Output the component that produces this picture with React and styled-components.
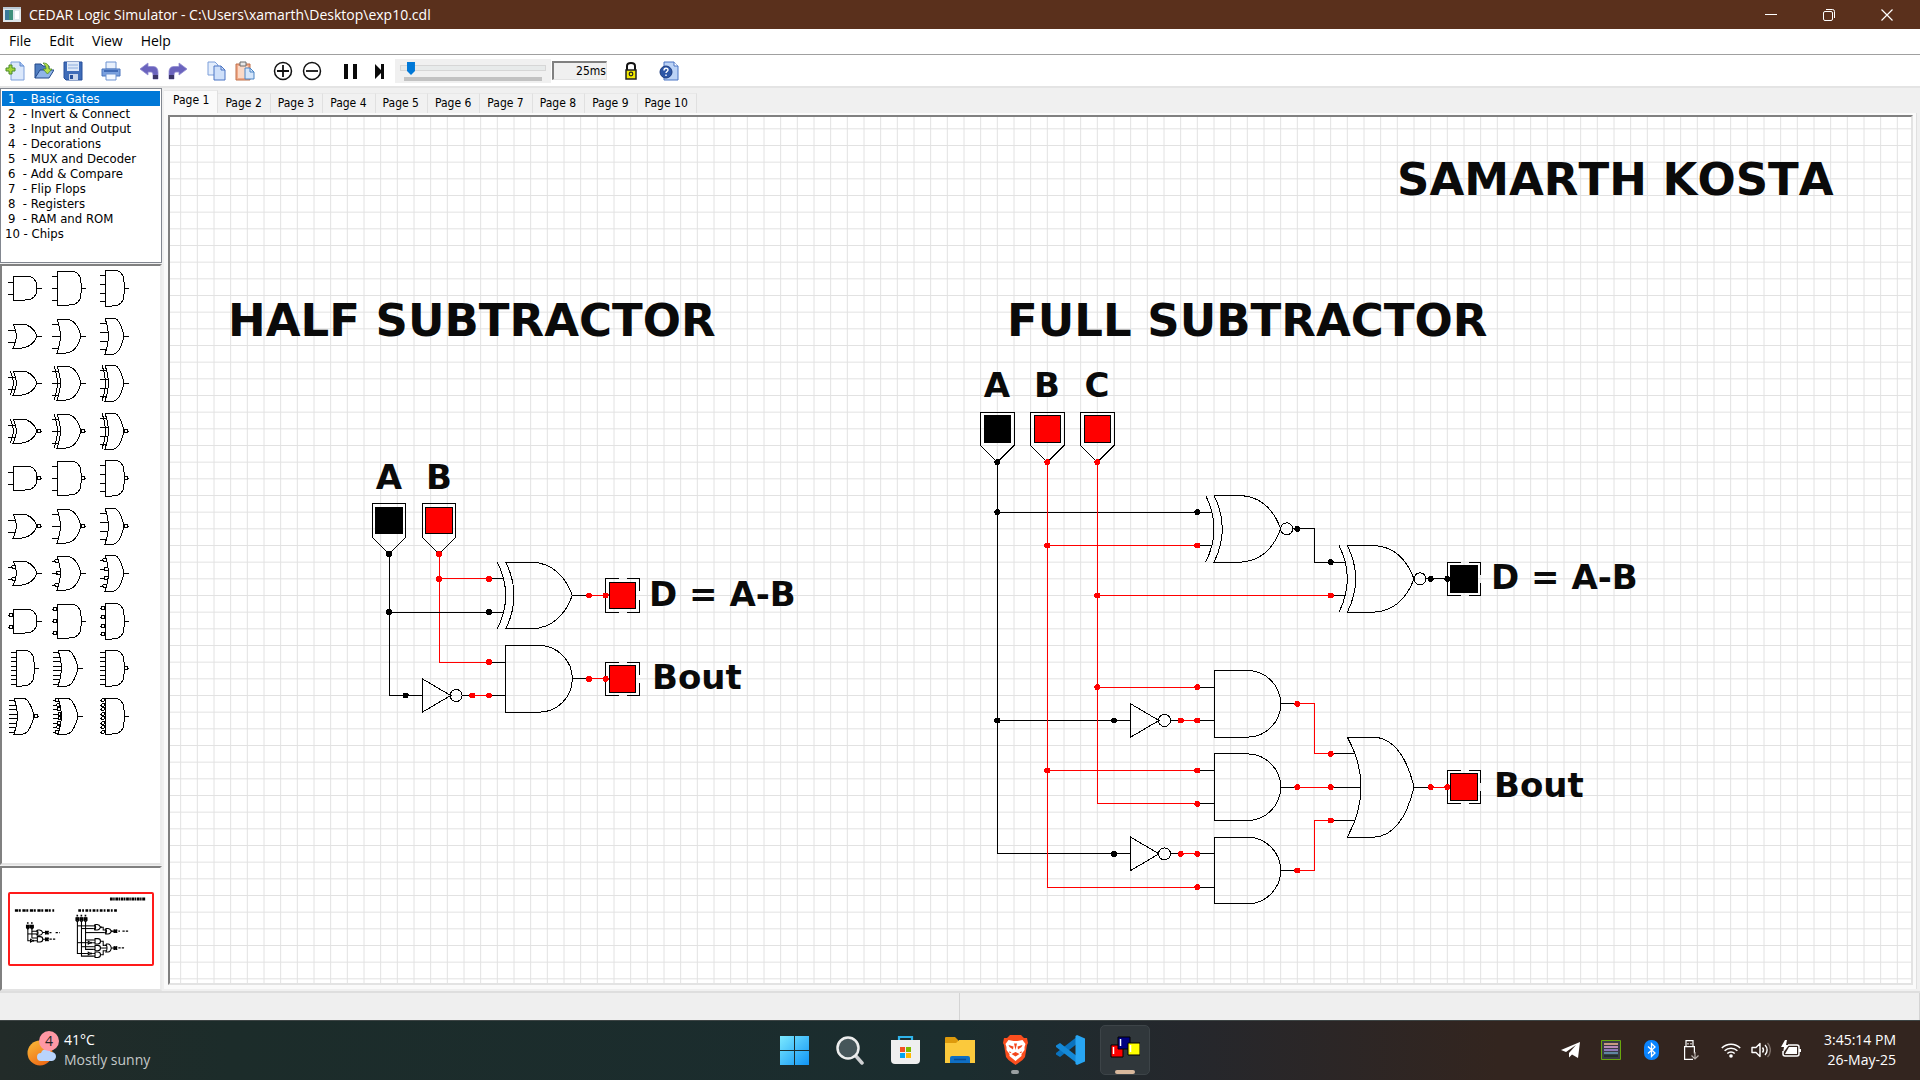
import React from "react";
import styled, { createGlobalStyle, css } from "styled-components";

const UI = `"Open Sans", "Noto Sans", sans-serif`;
const SMALL = `"DejaVu Sans Condensed", "DejaVu Sans", sans-serif`;

const GlobalStyle = createGlobalStyle`
  * { box-sizing: border-box; }
  html, body, #root { height: 100%; }
  body { margin: 0; background: #f0f0f0; font-family: ${UI}; color: #000; overflow: hidden; }
  button { font: inherit; color: inherit; background: none; border: 0; padding: 0; margin: 0; }
  ul { list-style: none; margin: 0; padding: 0; }
  svg { display: block; }
`;

const Window = styled.div`
  display: flex;
  flex-direction: column;
  height: 100vh;
`;

/* ---------- title bar, menu ---------- */

const TitleBar = styled.header`
  display: flex;
  align-items: center;
  height: 29px;
  padding: 0 4px 0 3px;
  gap: 8px;
  background: #5a301c;
  color: #fff;
`;
const TitleText = styled.h1`
  flex: 1;
  margin: 0;
  font-size: 14px;
  font-weight: 400;
  line-height: 20px;
  white-space: nowrap;
`;
const Captions = styled.div`
  display: flex;
`;
const CaptionButton = styled.button`
  display: grid;
  place-items: center;
  width: 58px;
  height: 29px;
`;
const MenuBar = styled.nav`
  display: flex;
  height: 26px;
  padding: 0 0 2px 9px;
  gap: 18px;
  background: #fff;
  border-bottom: 1px solid #a0a0a0;
`;
const MenuItem = styled.button`
  font-size: 14px;
  line-height: 24px;
`;

/* ---------- toolbar ---------- */

const Toolbar = styled.div`
  display: flex;
  align-items: center;
  height: 33px;
  background: #fff;
  border-bottom: 2px solid #e4e4e4;
`;
const ToolGroup = styled.div`
  display: flex;
  margin-right: ${(p) => (p.$last ? 2 : 9)}px;
`;
const ToolButton = styled.button`
  display: grid;
  place-items: center;
  width: 29px;
  height: 24px;
`;
const SliderBox = styled.label`
  display: flex;
  flex-direction: column;
  gap: 2px;
  width: 156px;
  height: 24px;
  padding: 3px 6px 0;
  background: #f0f0f0;
`;
const Speed = styled.input`
  appearance: none;
  display: block;
  width: 100%;
  height: 13px;
  margin: 0;
  background: none;
  &::-webkit-slider-runnable-track {
    height: 4px;
    background: #e7eaea;
    box-shadow: 0 0 0 1px #d6d6d6;
  }
  &::-webkit-slider-thumb {
    appearance: none;
    width: 8px;
    height: 13px;
    margin-top: -4px;
    background: #0078d7;
    clip-path: polygon(0 0, 100% 0, 100% 70%, 50% 100%, 0 70%);
  }
`;
const SpeedShade = styled.span`
  height: 4px;
  margin: 0 3px;
  background: #c2c2c2;
`;
const Readout = styled.output`
  width: 55px;
  height: 19px;
  margin: 0 9px 0 1px;
  border: 2px solid #808080;
  border-right: 1px solid #e3e3e3;
  border-bottom: 1px solid #e3e3e3;
  background: #f0f0f0;
  font-family: ${SMALL};
  font-size: 12px;
  line-height: 17px;
  text-align: right;
`;

/* ---------- workspace ---------- */

const Workspace = styled.main`
  display: flex;
  flex: 1;
  min-height: 0;
  background: #f0f0f0;
  border-bottom: 2px solid #dedede;
`;
const Side = styled.aside`
  display: flex;
  flex-direction: column;
  width: 162px;
  gap: 1px;
`;
const GateList = styled.ul`
  height: 175px;
  padding: 2px 1px;
  background: #fff;
  border: 1px solid #828790;
`;
const GateItem = styled.button`
  display: block;
  width: 100%;
  height: 15px;
  padding-left: ${(p) => (p.$wide ? 3 : 6)}px;
  font-family: ${SMALL};
  font-size: 13px;
  line-height: 15px;
  text-align: left;
  white-space: pre;
  ${(p) =>
    p.$active &&
    css`
      background: #0078d7;
      color: #fff;
    `}
`;
const sunken = css`
  background: #fff;
  border: 2px solid #808080;
  border-right-color: #ececec;
  border-bottom-color: #e3e3e3;
`;
const Palette = styled.div`
  ${sunken}
  flex: 1;
  min-height: 0;
`;
const PaletteGrid = styled.div`
  display: grid;
  grid-template-columns: repeat(3, 45px);
  grid-template-rows: repeat(10, 1fr);
  height: 475px;
`;
const PaletteButton = styled.button`
  display: grid;
  align-content: start;
`;
const Overview = styled.div`
  ${sunken}
  display: grid;
  place-items: center;
  height: 125px;
`;
const OverviewFrame = styled.div`
  padding: 0;
  border: 2px solid #ff1a1a;
  border-radius: 2px;
`;

const Pages = styled.section`
  display: flex;
  flex-direction: column;
  flex: 1;
  min-width: 0;
  padding: 2px 3px 2px 2px;
`;
const Tabs = styled.div`
  display: flex;
  align-items: flex-end;
  height: 23px;
`;
const Tab = styled.button`
  height: ${(p) => (p.$active ? 23 : 20)}px;
  padding: ${(p) => (p.$active ? "0 8px 4px 9px" : "0 8px 2px 7px")};
  background: ${(p) => (p.$active ? "#fafafa" : "#f1f1f1")};
  border-right: 1px solid #e0e0e0;
  border-top: 1px solid #e8e8e8;
  font-family: ${SMALL};
  font-size: 12px;
  line-height: 18px;
  white-space: nowrap;
`;
const PageBody = styled.div`
  display: flex;
  flex: 1;
  min-height: 0;
  padding: 2px 3px 4px 4px;
  background: #fafafa;
  border-right: 1px solid #e0e0e0;
`;
const Canvas = styled.div`
  flex: 1;
  min-width: 0;
  overflow: hidden;
  background: #fff;
  border: 2px solid #808080;
  border-right-color: #e3e3e3;
  border-bottom-color: #e3e3e3;
`;
const StatusBar = styled.footer`
  display: grid;
  grid-template-columns: 1fr 1fr;
  height: 27px;
  background: #efefef;
`;
const StatusPane = styled.div`
  border-right: 1px solid #d4d4d4;
`;

/* ---------- taskbar ---------- */

const Taskbar = styled.footer`
  display: grid;
  grid-template-columns: 1fr auto 1fr;
  align-items: center;
  height: 60px;
  padding-bottom: 2px;
  border-top: 1px solid #3d4444;
  background: linear-gradient(90deg, #222b29 0%, #1c2c2a 12%, #1b2d2f 50%, #25272c 62%, #33251f 78%, #33251f 100%);
  color: #fff;
  font-size: 14px;
  line-height: 20px;
`;
const Weather = styled.button`
  display: flex;
  gap: 5px;
  padding-left: 27px;
  align-items: center;
  text-align: left;
`;
const Muted = styled.div`
  color: #c4c8c8;
`;
const Apps = styled.div`
  display: flex;
  gap: 5px;
`;
const AppButton = styled.button`
  display: grid;
  place-items: center;
  position: relative;
  width: 50px;
  height: 50px;
  border-radius: 5px;
  border: 1px solid ${(p) => (p.$active ? "#3d4448" : "transparent")};
  background: ${(p) => (p.$active ? "#30373b" : "none")};
`;
const Running = styled.span`
  position: absolute;
  left: 50%;
  bottom: 0;
  width: ${(p) => (p.$active ? 20 : 8)}px;
  height: 4px;
  border-radius: 2px;
  transform: translateX(-50%);
  background: ${(p) => (p.$active ? "#d8b89c" : "#9aa0a2")};
`;
const Tray = styled.div`
  display: flex;
  justify-content: flex-end;
  align-items: center;
  gap: 5px;
  padding-right: 24px;
`;
const TrayGroup = styled.div`
  display: flex;
`;
const TrayButton = styled.button`
  display: grid;
  place-items: center;
  width: ${(p) => (p.$tight ? 30 : 40)}px;
  height: 40px;
`;
const Clock = styled.time`
  margin-left: 5px;
  text-align: right;
  white-space: nowrap;
  min-width: 80px;
`;

/* ---------- circuit drawing ---------- */

const CELL = 16.6667;
const ORIGIN_X = 10.67;
const ORIGIN_Y = 11.83;
const gx = (v) => ORIGIN_X + v * CELL;
const gy = (v) => ORIGIN_Y + v * CELL;

const RED = "#ff0000";
const BLACK = "#000000";

const Wire = ({ pts, c = BLACK }) => (
  <polyline points={pts.map(([a, b]) => `${gx(a)},${gy(b)}`).join(" ")} stroke={c} fill="none" />
);
const Dots = ({ at, c = BLACK }) =>
  at.map(([a, b], i) => <circle key={i} cx={gx(a)} cy={gy(b)} r="3" fill={c} stroke="none" />);

const P = (parts) => parts.map((t) => (Array.isArray(t) ? `${gx(t[0])} ${gy(t[1])}` : t)).join(" ");

const AndGate = ({ x, y }) => (
  <path
    d={`${P(["M", [x + 2, y - 2], "H"])} ${gx(x)} V ${gy(y + 2)} H ${gx(x + 2)} A ${2 * CELL} ${2 * CELL} 0 0 0 ${gx(x + 2)} ${gy(y - 2)}
    ${P(["M", [x + 4, y], "L", [x + 5, y], "M", [x - 1, y - 1], "L", [x, y - 1], "M", [x - 1, y + 1], "L", [x, y + 1]])}`}
  />
);
const OrBody = ({ x, y, h, bulge }) => (
  <path
    d={P([
      "M", [x, y - h], "L", [x + 1.6, y - h],
      "Q", [x + 3.3, y - h + 0.1], [x + 4, y],
      "Q", [x + 3.3, y + h - 0.1], [x + 1.6, y + h],
      "L", [x, y + h],
      "Q", [x + bulge * 2, y], [x, y - h],
    ])}
  />
);
const XorGate = ({ x, y, inverted }) => (
  <g>
    <OrBody x={x} y={y} h={2} bulge={0.5} />
    <path
      d={P([
        "M", [x - 0.5, y - 2], "Q", [x + 0.5, y], [x - 0.5, y + 2],
        "M", [x - 1, y - 1], "L", [x - 0.1, y - 1],
        "M", [x - 1, y + 1], "L", [x - 0.1, y + 1],
        "M", [x + (inverted ? 4.7 : 4), y], "L", [x + 5, y],
      ])}
    />
    {inverted && <circle cx={gx(x + 4.36)} cy={gy(y)} r="6" />}
  </g>
);
const OrGate = ({ x, y }) => (
  <g>
    <OrBody x={x} y={y} h={3} bulge={0.82} />
    <path
      d={P([
        "M", [x - 1, y - 2], "L", [x + 0.45, y - 2],
        "M", [x - 1, y], "L", [x + 0.82, y],
        "M", [x - 1, y + 2], "L", [x + 0.45, y + 2],
        "M", [x + 4, y], "L", [x + 5, y],
      ])}
    />
  </g>
);
const NotGate = ({ x, y }) => (
  <g>
    <path d={P(["M", [x, y - 1], "L", [x + 1.7, y], "L", [x, y + 1], "Z", "M", [x - 1, y], "L", [x, y], "M", [x + 2.4, y], "L", [x + 3, y]])} />
    <circle cx={gx(x + 2.03)} cy={gy(y)} r="6" />
  </g>
);
const Toggle = ({ x, y, c }) => (
  <g>
    <path d={P(["M", [x, y], "L", [x - 1, y - 1], "L", [x - 1, y - 3], "L", [x + 1, y - 3], "L", [x + 1, y - 1], "Z"])} />
    <rect x={gx(x - 0.8)} y={gy(y - 2.8)} width={1.6 * CELL} height={1.6 * CELL} fill={c} />
  </g>
);
const Led = ({ x, y, c }) => (
  <g>
    <path
      d={P([
        "M", [x + 0.8, y - 1], "L", [x, y - 1], "L", [x, y + 1], "L", [x + 0.8, y + 1],
        "M", [x + 1.3, y - 1], "L", [x + 2, y - 1], "L", [x + 2, y - 0.25],
        "M", [x + 2, y + 0.25], "L", [x + 2, y + 1], "L", [x + 1.3, y + 1],
      ])}
    />
    <rect x={gx(x + 0.2)} y={gy(y - 0.8)} width={1.6 * CELL} height={1.6 * CELL} fill={c} />
  </g>
);

const Circuit = () => (
  <g>
    <AndGate x={19.5} y={33} />
    <XorGate x={19.5} y={28} />
    <NotGate x={14.5} y={34} />
    <Toggle x={12.5} y={25.5} c={BLACK} />
    <Toggle x={15.5} y={25.5} c={RED} />
    <Wire c={RED} pts={[[15.5, 25.5], [15.5, 32], [18.5, 32]]} />
    <Wire c={RED} pts={[[15.5, 27], [18.5, 27]]} />
    <Wire pts={[[12.5, 25.5], [12.5, 34], [13.5, 34]]} />
    <Wire pts={[[12.5, 29], [18.5, 29]]} />
    <Wire c={RED} pts={[[17.5, 34], [18.5, 34]]} />
    <Led x={25.5} y={28} c={RED} />
    <Led x={25.5} y={33} c={RED} />
    <Wire c={RED} pts={[[24.5, 28], [25.5, 28]]} />
    <Wire c={RED} pts={[[24.5, 33], [25.5, 33]]} />
    <Dots at={[[12.5, 25.5], [12.5, 29], [18.5, 29], [13.5, 34]]} />
    <Dots c={RED} at={[[15.5, 25.5], [15.5, 27], [18.5, 27], [18.5, 32], [17.5, 34], [18.5, 34], [24.5, 28], [25.5, 28], [24.5, 33], [25.5, 33]]} />

    <Toggle x={49} y={20} c={BLACK} />
    <Toggle x={52} y={20} c={RED} />
    <Toggle x={55} y={20} c={RED} />
    <XorGate x={62} y={24} inverted />
    <XorGate x={70} y={27} inverted />
    <NotGate x={57} y={35.5} />
    <NotGate x={57} y={43.5} />
    <AndGate x={62} y={34.5} />
    <AndGate x={62} y={39.5} />
    <AndGate x={62} y={44.5} />
    <OrGate x={70} y={39.5} />
    <Led x={76} y={27} c={BLACK} />
    <Led x={76} y={39.5} c={RED} />
    <Wire pts={[[49, 20], [49, 43.5], [56, 43.5]]} />
    <Wire pts={[[49, 23], [61, 23]]} />
    <Wire pts={[[49, 35.5], [56, 35.5]]} />
    <Wire pts={[[67, 24], [68, 24], [68, 26], [69, 26]]} />
    <Wire pts={[[75, 27], [76, 27]]} />
    <Wire c={RED} pts={[[52, 20], [52, 45.5], [61, 45.5]]} />
    <Wire c={RED} pts={[[52, 25], [61, 25]]} />
    <Wire c={RED} pts={[[52, 38.5], [61, 38.5]]} />
    <Wire c={RED} pts={[[55, 20], [55, 40.5], [61, 40.5]]} />
    <Wire c={RED} pts={[[55, 28], [69, 28]]} />
    <Wire c={RED} pts={[[55, 33.5], [61, 33.5]]} />
    <Wire c={RED} pts={[[60, 35.5], [61, 35.5]]} />
    <Wire c={RED} pts={[[60, 43.5], [61, 43.5]]} />
    <Wire c={RED} pts={[[67, 34.5], [68, 34.5], [68, 37.5], [69, 37.5]]} />
    <Wire c={RED} pts={[[67, 39.5], [69, 39.5]]} />
    <Wire c={RED} pts={[[67, 44.5], [68, 44.5], [68, 41.5], [69, 41.5]]} />
    <Wire c={RED} pts={[[75, 39.5], [76, 39.5]]} />
    <Dots at={[[49, 20], [49, 23], [61, 23], [49, 35.5], [56, 35.5], [56, 43.5], [67, 24], [69, 26], [75, 27], [76, 27]]} />
    <Dots
      c={RED}
      at={[
        [52, 20], [55, 20], [52, 25], [61, 25], [55, 28], [69, 28], [55, 33.5], [61, 33.5], [60, 35.5], [61, 35.5],
        [52, 38.5], [61, 38.5], [61, 40.5], [60, 43.5], [61, 43.5], [61, 45.5], [67, 34.5], [67, 39.5], [67, 44.5],
        [69, 37.5], [69, 39.5], [69, 41.5], [75, 39.5], [76, 39.5],
      ]}
    />
  </g>
);

const Heading = styled.text`
  font: 700 45px "DejaVu Sans", sans-serif;
  font-kerning: none;
  fill: #0a0a0a;
`;
const Label = styled.text`
  font: 700 34px "DejaVu Sans", sans-serif;
  fill: #0a0a0a;
`;

const LABELS = [
  ["A", 219, 372, true], ["B", 269, 372, true],
  ["D = A-B", 479, 489], ["Bout", 482, 572],
  ["A", 827, 280, true], ["B", 877, 280, true], ["C", 927, 280, true],
  ["D = A-B", 1321, 472], ["Bout", 1324, 680],
];

const gridPath = (() => {
  let d = "";
  for (let i = 0; i < 240; i++) d += `M${gx(i).toFixed(2)} 0V2200`;
  for (let i = 0; i < 130; i++) d += `M0 ${gy(i).toFixed(2)}H4000`;
  return d;
})();

const Schematic = () => (
  <svg width="100%" height="100%" role="img" aria-label="Circuit">
    <path d={gridPath} stroke="#e2e2e2" strokeWidth="1" />
    <g fill="none" stroke="#000" strokeWidth="1" shapeRendering="crispEdges">
      <Circuit />
    </g>
    <Heading x="1227" y="78">SAMARTH KOSTA</Heading>
    <Heading x="58" y="219">HALF SUBTRACTOR</Heading>
    <Heading x="837" y="219">FULL SUBTRACTOR</Heading>
    {LABELS.map(([t, x, y, mid], i) => (
      <Label key={i} x={x} y={y} textAnchor={mid ? "middle" : "start"}>{t}</Label>
    ))}
  </svg>
);

const miniStyle = { filter: "grayscale(1) brightness(0)" };
const Mini = () => (
  <svg width="142" height="70" viewBox="0 0 1743 868" preserveAspectRatio="none" aria-hidden="true">
    <g fill="none" stroke="#000" strokeWidth="13" style={miniStyle}>
      <Circuit />
    </g>
    <g fill="none" stroke="#000" strokeWidth="30">
      <path d="M1227 62H1665" strokeDasharray="34 6 18 8" strokeWidth="36" />
      <path d="M60 204H542" strokeDasharray="40 8 24 20" />
      <path d="M838 204H1318" strokeDasharray="34 14 22 18" />
      <path d="M208 360h20M258 360h20M816 268h20M866 268h20M916 268h20" strokeWidth="20" />
      <path d="M485 478h24M560 478h50M485 560h80M1330 460h20M1380 460h70M1330 668h70" strokeWidth="16" strokeDasharray="28 14" />
    </g>
  </svg>
);

/* ---------- gate palette ---------- */

const INPUTS = {
  2: [-6, 6],
  3: [-12, 0, 12],
  4: [-13, -4, 5, 13],
  8: [-16, -11, -7, -2, 2, 7, 11, 16],
};
const HALF = { 2: 12, 3: 17, 4: 18, 8: 18 };

const PaletteGate = ({ kind, n, nout, nin, l, r }) => {
  const h = HALF[n];
  const cy = 22;
  const round = kind === "and";
  const rad = Math.min(h, 12);
  const body = round
    ? `M${l} ${cy - h}H${r - rad}Q${r} ${cy - h} ${r} ${cy - h + rad}V${cy + h - rad}Q${r} ${cy + h} ${r - rad} ${cy + h}H${l}Z`
    : `M${l} ${cy - h}H${l + 9}Q${r - 4} ${cy - h + 1} ${r} ${cy}Q${r - 4} ${cy + h - 1} ${l + 9} ${cy + h}H${l}Q${l + 7} ${cy} ${l} ${cy - h}`;
  const depth = (y) => (round ? 0 : 3.5 * (1 - (y / h) ** 2));
  return (
    <svg width="45" height="44" fill="none" stroke="#000" shapeRendering="crispEdges">
      <path d={body} />
      {kind === "xor" && <path d={`M${l - 3} ${cy - h}Q${l + 4} ${cy} ${l - 3} ${cy + h}`} />}
      {INPUTS[n].map((y) => (
        <g key={y}>
          <path d={`M${l - 5} ${cy + y}H${nin ? l + depth(y) - 3 : l + depth(y)}`} />
          {nin && <circle cx={l + depth(y) - 2} cy={cy + y} r={n === 8 ? 1.5 : 2} />}
        </g>
      ))}
      {nout && <circle cx={r + 2} cy={cy} r="2" />}
      <path d={`M${nout ? r + 4 : r} ${cy}H${r + 5}`} />
    </svg>
  );
};

const trio = (kind, opts = {}) => [
  { kind, n: 2, l: 11, r: 35, ...opts },
  { kind, n: 3, l: 10, r: 34, ...opts },
  { kind, n: 4, l: 13, r: 32, ...opts },
];
const GATES = [
  ...trio("and"),
  ...trio("or"),
  ...trio("xor"),
  ...trio("xor", { nout: true }),
  ...trio("and", { nout: true }),
  ...trio("or", { nout: true }),
  ...trio("or", { nin: true }),
  ...trio("and", { nin: true }),
  { kind: "and", n: 8, l: 14, r: 32 },
  { kind: "or", n: 8, l: 11, r: 31 },
  { kind: "and", n: 8, l: 13, r: 32, nout: true },
  { kind: "or", n: 8, l: 12, r: 32, nout: true },
  { kind: "or", n: 8, l: 11, r: 31, nin: true },
  { kind: "and", n: 8, l: 13, r: 32, nin: true },
];

/* ---------- icons ---------- */

const Icon = ({ children, size = 20, box = 20 }) => (
  <svg width={size} height={size} viewBox={`0 0 ${box} ${box}`} fill="none" aria-hidden="true">
    {children}
  </svg>
);
const icons = {
  New: (
    <Icon>
      <path d="M6 1h9l4 4v14H6z" fill="#dbe8fb" stroke="#7d9fda" />
      <path d="M15 1v4h4" fill="#a9c4f0" stroke="#5f8ad0" />
      <path d="M4 4h3v3h3v3H7v3H4v-3H1V7h3z" fill="#a5d63a" stroke="#4a8a2a" />
    </Icon>
  ),
  Open: (
    <Icon>
      <path d="M1 17V3h6l2 2h6v4" fill="#4f7dc0" stroke="#23488a" />
      <path d="M1 17L6 9h14l-5 8z" fill="#8fb4e8" stroke="#23488a" />
      <path d="M9 2c5 0 6 3 6 6h3l-4.500 5L9 8h3c0-3-1-4-3-6z" fill="#b6e04a" stroke="#4a8a2a" strokeWidth=".8" />
    </Icon>
  ),
  Save: (
    <Icon>
      <path d="M1 1h18v18H3l-2-2z" fill="#3f6cb8" stroke="#274f9a" />
      <path d="M4 1h12v9H4z" fill="#dfe9f8" />
      <path d="M5 4h10M5 7h10" stroke="#8eaede" />
      <path d="M6 13h9v6H6z" fill="#c7d4ea" />
      <path d="M7 14h3v4H7z" fill="#274f9a" />
    </Icon>
  ),
  Print: (
    <Icon>
      <path d="M5 1h10v7H5z" fill="#e8f0fc" stroke="#6f94d2" />
      <path d="M1 8h18v7H1z" fill="#7aa0de" stroke="#4a74bd" />
      <path d="M3 10h14" stroke="#2f5aa8" strokeWidth="1.500" />
      <path d="M5 13h10v6H5z" fill="#f4f8ff" stroke="#6f94d2" />
    </Icon>
  ),
  Undo: (
    <Icon>
      <path d="M1 8l8-6v3.500h5c4 0 5 3 5 6V18h-5v-4c0-2-1-3-2-3H9v3z" fill="#6a63bd" stroke="#8f8ad0" strokeWidth=".8" />
      <path d="M14 14h5v4h-5z" fill="#3b3568" />
    </Icon>
  ),
  Redo: (
    <Icon>
      <path d="M19 8l-8-6v3.500H6c-4 0-5 3-5 6V18h5v-4c0-2 1-3 2-3h3v3z" fill="#6a63bd" stroke="#8f8ad0" strokeWidth=".8" />
      <path d="M1 14h5v4H1z" fill="#3b3568" />
    </Icon>
  ),
  Copy: (
    <Icon>
      <path d="M2 1h7l3 3v10H2z" fill="#e3edfc" stroke="#7d9fda" />
      <path d="M8 5h7l4 4v10H8z" fill="#cfe0fa" stroke="#4a74c4" />
      <path d="M15 5v4h4" stroke="#4a74c4" />
    </Icon>
  ),
  Paste: (
    <Icon>
      <path d="M1 3h14v16H1z" fill="#f0a988" stroke="#c0704a" />
      <path d="M3 5h10v12H3z" fill="#fbd9c6" />
      <path d="M5 1h6v4H5z" fill="#e6e6e6" stroke="#6d6d6d" />
      <path d="M10 7h5l4 4v7h-9z" fill="#d5e6fb" stroke="#4a84c4" />
      <path d="M15 7v4h4" stroke="#4a84c4" />
    </Icon>
  ),
  "Zoom in": (
    <Icon>
      <circle cx="10" cy="10" r="8.500" stroke="#111" strokeWidth="1.500" />
      <path d="M4 10h12M10 4v12" stroke="#111" strokeWidth="1.800" />
    </Icon>
  ),
  "Zoom out": (
    <Icon>
      <circle cx="10" cy="10" r="8.500" stroke="#111" strokeWidth="1.500" />
      <path d="M4 10h12" stroke="#111" strokeWidth="1.800" />
    </Icon>
  ),
  Pause: (
    <Icon>
      <path d="M4 3h4v15H4zM13 3h4v15h-4z" fill="#0a0a0a" />
    </Icon>
  ),
  Step: (
    <Icon>
      <path d="M6 3l6 6V3h3v15h-3v-6l-6 6z" fill="#0a0a0a" />
    </Icon>
  ),
  Lock: (
    <Icon>
      <path d="M6 9V5c0-2 2-3 4-3s4 1 4 3v4" stroke="#111" strokeWidth="2" />
      <path d="M5 9h10v9H5z" fill="#f2ea00" stroke="#222" strokeWidth="1.500" />
      <circle cx="10" cy="13" r="1.800" stroke="#222" strokeWidth="1.200" />
    </Icon>
  ),
  Help: (
    <Icon>
      <path d="M5 1h10l4 4v14H5z" fill="#bcd3f6" stroke="#4a74c4" />
      <path d="M15 1v4h4" fill="#fff" stroke="#4a74c4" />
      <circle cx="7" cy="11" r="6" fill="#2c56a6" stroke="#1c3c80" />
      <path d="M5 9.500c0-3 4-3 4-.5 0 1.500-2 1.500-2 3M7 13.500v1.500" stroke="#fff" strokeWidth="1.400" />
    </Icon>
  ),
};

const GROUPS = [
  ["New", "Open", "Save"],
  ["Print"],
  ["Undo", "Redo"],
  ["Copy", "Paste"],
  ["Zoom in", "Zoom out"],
  ["Pause", "Step"],
];

const AppIcon = () => (
  <svg width="18" height="15" viewBox="0 0 18 15" aria-hidden="true">
    <rect width="18" height="15" fill="#dfe6ea" />
    <rect x="2" y="3" width="8" height="10" fill="#3f8f7a" />
    <rect x="2" y="3" width="4" height="10" fill="#3a7a9a" />
    <rect x="12" y="4" width="4" height="8" fill="#fff" />
    <rect width="18" height="2" fill="#b9c8d4" />
  </svg>
);

const WeatherIcon = () => (
  <svg width="32" height="38" viewBox="0 0 32 38" aria-hidden="true">
    <defs>
      <linearGradient id="sun" x1="0" y1="0" x2="0.600" y2="1">
        <stop offset="0" stopColor="#f9bd3a" />
        <stop offset="1" stopColor="#ee6c16" />
      </linearGradient>
    </defs>
    <circle cx="13" cy="22" r="12.500" fill="url(#sun)" />
    <path d="M14 30a4 4 0 0 1 0-8 5.500 5.500 0 0 1 10-1 4.500 4.500 0 0 1 1 9z" fill="#b9d4fb" />
    <circle cx="22" cy="10" r="10" fill="#ff98a4" />
    <text x="22" y="15" textAnchor="middle" fontSize="14" fontFamily="Open Sans, sans-serif" fill="#222">4</text>
  </svg>
);

const apps = [
  [
    "Start",
    <Icon size={30} box={30}>
      <defs>
        <linearGradient id="win" x1="0" y1="0" x2="1" y2="1">
          <stop offset="0" stopColor="#7be9ff" />
          <stop offset="1" stopColor="#1094f4" />
        </linearGradient>
      </defs>
      <path d="M0 1h14v14H0zM15 1h14v14H15zM0 16h14v14H0zM15 16h14v14H15z" fill="url(#win)" />
    </Icon>,
  ],
  [
    "Search",
    <Icon size={30} box={30}>
      <path d="M20 20l7 8" stroke="#cfd1d3" strokeWidth="3.500" strokeLinecap="round" />
      <circle cx="13" cy="13" r="10.500" fill="#46565a" stroke="#eceded" strokeWidth="2.500" />
    </Icon>,
  ],
  [
    "Store",
    <Icon size={30} box={30}>
      <path d="M9 7V2h13v5" stroke="#2fb4ea" strokeWidth="2.200" />
      <path d="M1 5h29v20a4 4 0 0 1-4 4H5a4 4 0 0 1-4-4z" fill="#efefef" />
      <path d="M10 12h5v5h-5z" fill="#f25022" />
      <path d="M16 12h5v5h-5z" fill="#7fba00" />
      <path d="M10 18h5v5h-5z" fill="#00a4ef" />
      <path d="M16 18h5v5h-5z" fill="#ffb900" />
    </Icon>,
  ],
  [
    "Files",
    <Icon size={30} box={30}>
      <path d="M0 3a1 1 0 0 1 1-1h9l3 3v5H0z" fill="#dd9a0c" />
      <path d="M0 8h11l3-3h16v23H0z" fill="#fbc93c" />
      <path d="M5 28v-5a2 2 0 0 1 2-2h16a2 2 0 0 1 2 2v5z" fill="#0f6fc4" />
      <path d="M9 24.500h12" stroke="#0a4b92" strokeWidth="1.500" />
    </Icon>,
  ],
  [
    "Brave",
    <Icon size={30} box={30}>
      <path d="M10 0h11l3 3 3 0 1 5-1 2-2 12-2.500 3L15.500 30l-7-5-2.500-3-2-12-1-2L4 3l3 0z" fill="#fb4e1e" />
      <path d="M8.500 5l5 1h4l5-1 3 4-1 3 0 3-3 4 0 2-6 5-6-5 0-2-3-4 0-3-1-3z" fill="#fff" />
      <path d="M8.500 10l5 1.500-.5 3L9.500 12zM22.500 10l-5 1.500.5 3L21.500 12zM14 8.500h3L15.500 15zM11.500 19l4-2 4 2-4 2.500zM9.500 16l2 2-2 0zM21.500 16l-2 2 2 0z" fill="#f3471c" />
    </Icon>,
  ],
  [
    "Code",
    <Icon size={30} box={30}>
      <path d="M23 1v7L5 22 1 19.500 1 18z" fill="#0a72be" />
      <path d="M23 29v-7L5 8 1 10.500 1 12z" fill="#1489d8" />
      <path d="M22 0l8 3.500v23L22 30l-1.500-1V1z" fill="#28a5f2" />
    </Icon>,
  ],
  [
    "CEDAR",
    <Icon size={30} box={30}>
      <path d="M1 10h12v12H1z" fill="#f00" stroke="#000" />
      <path d="M8 2h12v12H8z" fill="#000080" stroke="#000" />
      <path d="M18 8h12v12H18z" fill="#ff0" stroke="#000" />
      <path d="M3.500 12v7M10.500 4v7M20.500 10v7" stroke="#fff" strokeWidth="1.500" />
    </Icon>,
  ],
];

const trayApps = [
  ["Telegram", <Icon><path d="M0 10L19 2 17 18l-6-3.500-3 3L8 13l7-8-10 7z" fill="#fff" /></Icon>],
  [
    "Graphics",
    <Icon>
      <path d="M.5.5h19v19H.5z" fill="#3b3b46" stroke="#6aa80c" />
      <path d="M3 4h14" stroke="#c79a80" strokeWidth="2" />
      <path d="M3 7h14" stroke="#b98bb8" strokeWidth="2" />
      <path d="M3 10h14" stroke="#8f78b8" strokeWidth="2" />
      <path d="M3 13h14" stroke="#5f86a0" strokeWidth="2" />
      <path d="M3 16h14" stroke="#20302a" strokeWidth="2" />
    </Icon>,
  ],
  [
    "Bluetooth",
    <Icon>
      <rect x="3" y="0" width="15" height="20" rx="7" fill="#0a84ff" />
      <path d="M7 6.500l7 6.500-3.500 3.500v-13L14 7l-7 6.500" stroke="#fff" strokeWidth="1.300" />
    </Icon>,
  ],
  [
    "Eject",
    <Icon>
      <path d="M12 19.400H3.600V6.600h9.800v7M5 6.600V.6h7v6M7 3v1.500M10 3v1.500" stroke="#fff" strokeWidth="1.200" />
      <path d="M14 12v7M10.500 15.500l3.500 3.500 3.500-3.500" stroke="#b9b1ad" strokeWidth="1.200" />
    </Icon>,
  ],
];
const traySystem = [
  [
    "Network",
    <Icon>
      <path d="M0.800 8a13 13 0 0 1 18.400 0M3.600 10.800a9 9 0 0 1 12.800 0M6.300 13.500a5.200 5.200 0 0 1 7.400 0" stroke="#fff" strokeWidth="1.500" />
      <circle cx="10" cy="16" r="1.800" fill="#fff" />
    </Icon>,
  ],
  [
    "Volume",
    <Icon>
      <path d="M1 7.500h4l4-4v13l-4-4H1z" stroke="#fff" strokeWidth="1.400" strokeLinejoin="round" />
      <path d="M11.500 7.500a4 4 0 0 1 0 5M14 5a7 7 0 0 1 0 10" stroke="#fff" strokeWidth="1.400" />
      <path d="M16.500 3a10 10 0 0 1 0 14" stroke="#7a6d67" strokeWidth="1.400" />
    </Icon>,
  ],
  [
    "Battery",
    <Icon>
      <path d="M7 5h9a2 2 0 0 1 2 2v7a2 2 0 0 1-2 2H4a2 2 0 0 1-2-2v-3" stroke="#fff" strokeWidth="1.500" />
      <path d="M8 7h8v7H4z" fill="#fff" />
      <path d="M18 9h2v3h-2z" fill="#fff" />
      <path d="M4 0L0 7h3l-1 6 6-8H5l1-5z" fill="#fff" />
    </Icon>,
  ],
];

const CATEGORIES = [
  "1  - Basic Gates",
  "2  - Invert & Connect",
  "3  - Input and Output",
  "4  - Decorations",
  "5  - MUX and Decoder",
  "6  - Add & Compare",
  "7  - Flip Flops",
  "8  - Registers",
  "9  - RAM and ROM",
  "10 - Chips",
];

export default function App() {
  return (
    <>
      <GlobalStyle />
      <Window>
        <TitleBar>
          <AppIcon />
          <TitleText>CEDAR Logic Simulator - C:\Users\xamarth\Desktop\exp10.cdl</TitleText>
          <Captions>
            <CaptionButton aria-label="Minimize">
              <Icon size={12} box={12}><path d="M0 5.500h12" stroke="#fff" /></Icon>
            </CaptionButton>
            <CaptionButton aria-label="Restore">
              <Icon size={12} box={12}>
                <rect x=".5" y="2.500" width="9" height="9" rx="1.500" stroke="#fff" />
                <path d="M3 .5h6.500a2 2 0 0 1 2 2V9" stroke="#fff" />
              </Icon>
            </CaptionButton>
            <CaptionButton aria-label="Close">
              <Icon size={12} box={12}><path d="M.5.5l11 11M11.500.5l-11 11" stroke="#fff" strokeWidth="1.200" /></Icon>
            </CaptionButton>
          </Captions>
        </TitleBar>

        <MenuBar>
          {["File", "Edit", "View", "Help"].map((m) => (
            <MenuItem key={m}>{m}</MenuItem>
          ))}
        </MenuBar>

        <Toolbar>
          {GROUPS.map((g, i) => (
            <ToolGroup key={i} $last={i === GROUPS.length - 1}>
              {g.map((name) => (
                <ToolButton key={name} aria-label={name}>{icons[name]}</ToolButton>
              ))}
            </ToolGroup>
          ))}
          <SliderBox>
            <Speed type="range" min="0" max="500" defaultValue="22" aria-label="Simulation speed" />
            <SpeedShade />
          </SliderBox>
          <Readout>25ms</Readout>
          <ToolGroup>
            <ToolButton aria-label="Lock">{icons.Lock}</ToolButton>
          </ToolGroup>
          <ToolButton aria-label="Help">{icons.Help}</ToolButton>
        </Toolbar>

        <Workspace>
          <Side>
            <GateList>
              {CATEGORIES.map((c, i) => (
                <li key={c}>
                  <GateItem $active={i === 0} $wide={i === 9}>{c}</GateItem>
                </li>
              ))}
            </GateList>
            <Palette>
              <PaletteGrid>
                {GATES.map((g, i) => (
                  <PaletteButton key={i} aria-label={`${g.kind} gate, ${g.n} inputs`}>
                    <PaletteGate {...g} />
                  </PaletteButton>
                ))}
              </PaletteGrid>
            </Palette>
            <Overview>
              <OverviewFrame>
                <Mini />
              </OverviewFrame>
            </Overview>
          </Side>
          <Pages>
            <Tabs>
              {Array.from({ length: 10 }, (_, i) => (
                <Tab key={i} $active={i === 0}>Page {i + 1}</Tab>
              ))}
            </Tabs>
            <PageBody>
              <Canvas>
                <Schematic />
              </Canvas>
            </PageBody>
          </Pages>
        </Workspace>

        <StatusBar>
          <StatusPane />
          <StatusPane />
        </StatusBar>

        <Taskbar>
          <Weather>
            <WeatherIcon />
            <div>
              <div>41°C</div>
              <Muted>Mostly sunny</Muted>
            </div>
          </Weather>
          <Apps>
            {apps.map(([name, icon]) => (
              <AppButton key={name} aria-label={name} $active={name === "CEDAR"}>
                {icon}
                {(name === "Brave" || name === "CEDAR") && <Running $active={name === "CEDAR"} />}
              </AppButton>
            ))}
          </Apps>
          <Tray>
            <TrayGroup>
              {trayApps.map(([name, icon]) => (
                <TrayButton key={name} aria-label={name}>{icon}</TrayButton>
              ))}
            </TrayGroup>
            <TrayGroup>
              {traySystem.map(([name, icon]) => (
                <TrayButton key={name} aria-label={name} $tight>{icon}</TrayButton>
              ))}
            </TrayGroup>
            <Clock>
              <div>3:45:14 PM</div>
              <div>26-May-25</div>
            </Clock>
          </Tray>
        </Taskbar>
      </Window>
    </>
  );
}
